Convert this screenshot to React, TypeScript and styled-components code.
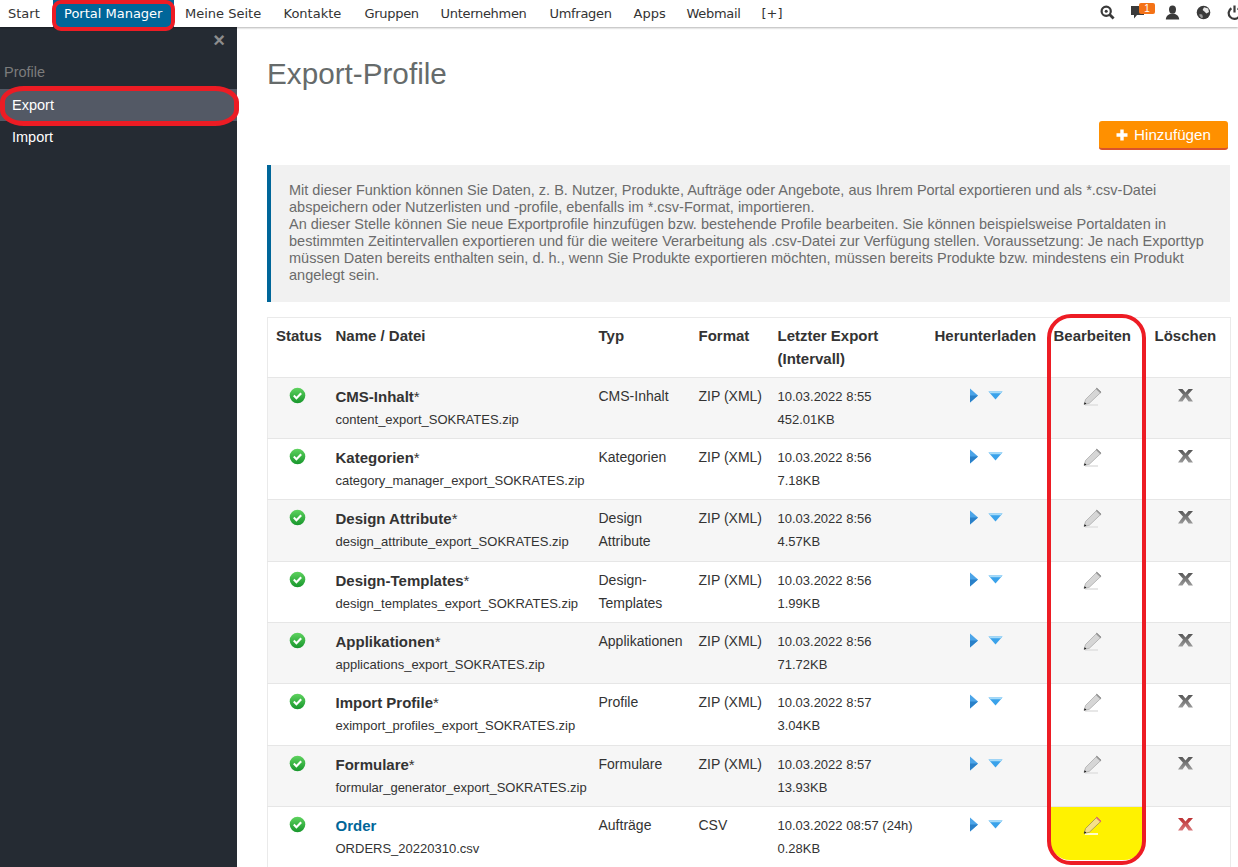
import React, { FC } from 'react'
import styled, { createGlobalStyle } from 'styled-components'

interface IProfile {
  name: string;
  file: string;
  type: string[];
  format: string;
  date: string;
  size: string;
  custom?: boolean;
}

const NAV_ITEMS = [
  { label: 'Start', width: 45 },
  { label: 'Portal Manager', width: 121 },
  { label: 'Meine Seite', width: 98.5 },
  { label: 'Kontakte', width: 81 },
  { label: 'Gruppen', width: 76, tight: true },
  { label: 'Unternehmen', width: 109, tight: true },
  { label: 'Umfragen', width: 84, tight: true },
  { label: 'Apps', width: 53 },
  { label: 'Webmail', width: 75, tight: true },
  { label: '[+]', width: 40 },
];

const PROFILES: IProfile[] = [
  { name: 'CMS-Inhalt', file: 'content_export_SOKRATES.zip', type: ['CMS-Inhalt'], format: 'ZIP (XML)', date: '10.03.2022 8:55', size: '452.01KB' },
  { name: 'Kategorien', file: 'category_manager_export_SOKRATES.zip', type: ['Kategorien'], format: 'ZIP (XML)', date: '10.03.2022 8:56', size: '7.18KB' },
  { name: 'Design Attribute', file: 'design_attribute_export_SOKRATES.zip', type: ['Design', 'Attribute'], format: 'ZIP (XML)', date: '10.03.2022 8:56', size: '4.57KB' },
  { name: 'Design-Templates', file: 'design_templates_export_SOKRATES.zip', type: ['Design-', 'Templates'], format: 'ZIP (XML)', date: '10.03.2022 8:56', size: '1.99KB' },
  { name: 'Applikationen', file: 'applications_export_SOKRATES.zip', type: ['Applikationen'], format: 'ZIP (XML)', date: '10.03.2022 8:56', size: '71.72KB' },
  { name: 'Import Profile', file: 'eximport_profiles_export_SOKRATES.zip', type: ['Profile'], format: 'ZIP (XML)', date: '10.03.2022 8:57', size: '3.04KB' },
  { name: 'Formulare', file: 'formular_generator_export_SOKRATES.zip', type: ['Formulare'], format: 'ZIP (XML)', date: '10.03.2022 8:57', size: '13.93KB' },
  { name: 'Order', file: 'ORDERS_20220310.csv', type: ['Aufträge'], format: 'CSV', date: '10.03.2022 08:57 (24h)', size: '0.28KB', custom: true },
];

const StatusIcon: FC = () => (
  <svg width="17" height="17" viewBox="0 0 17 17">
    <defs>
      <linearGradient id="okFill" x1="0" y1="0" x2="0" y2="1">
        <stop offset="0" stopColor="#5fd35f" />
        <stop offset="1" stopColor="#17962c" />
      </linearGradient>
    </defs>
    <circle cx="8.5" cy="8.5" r="7.8" fill="url(#okFill)" />
    <path d="M4.8 8.6l2.6 2.6 4.8-5" fill="none" stroke="#fff" strokeWidth="2.1" />
  </svg>
);

const PlayIcon: FC = () => (
  <svg width="10" height="15" viewBox="0 0 10 15">
    <path d="M1 0.5L9 7.5L1 14.5Z" fill="#4ba4e8" />
    <path d="M1 7.5L9 7.5L1 14.5Z" fill="#2a80c8" />
  </svg>
);

const DownIcon: FC = () => (
  <svg width="15" height="9" viewBox="0 0 15 9">
    <path d="M0.5 0.5H14.5L7.5 8.5Z" fill="#3aa2ea" />
    <path d="M0.5 0.5H14.5L13 2.3H2Z" fill="#a5dbf9" />
  </svg>
);

const PencilIcon: FC<{ active?: boolean }> = ({ active }) => (
  <svg width="19" height="19" viewBox="0 0 19 19">
    <path d="M2 18H15" stroke={active ? '#ffffff' : '#e2e2e2'} strokeWidth="1.6" />
    <path d="M1 17.5L2.6 12.4L13.8 1.2L18 5.2L6.4 16.2Z" fill={active ? '#f6e08a' : '#d6d6d6'} stroke={active ? '#8f8550' : '#a3a3a3'} strokeWidth="0.7" />
    <path d="M13.2 1.8L17.4 5.8L18 5.2L13.8 1.2Z" fill={active ? '#e2646a' : '#8f8f8f'} stroke={active ? '#e2646a' : '#8f8f8f'} strokeWidth="0.8" />
    <path d="M1 17.5L1.7 15.2L3.4 16.7Z" fill="#111" />
  </svg>
);

const DeleteIcon: FC<{ active?: boolean }> = ({ active }) => (
  <svg width="17" height="16" viewBox="0 0 17 16">
    <defs>
      <linearGradient id="delGray" x1="0" y1="0" x2="0" y2="1">
        <stop offset="0" stopColor="#555" />
        <stop offset="1" stopColor="#9a9a9a" />
      </linearGradient>
      <linearGradient id="delRed" x1="0" y1="0" x2="0" y2="1">
        <stop offset="0" stopColor="#bb2f31" />
        <stop offset="1" stopColor="#d9787b" />
      </linearGradient>
    </defs>
    <path d="M1 2H5.5L8.5 5.5L11.5 2H16L11 7.8L16 14.5H11.5L8.5 10.3L5.5 14.5H1L6 7.8Z" fill={active ? 'url(#delRed)' : 'url(#delGray)'} />
  </svg>
);

const SearchIcon: FC = () => (
  <svg width="15" height="15" viewBox="0 0 15 15">
    <circle cx="6.2" cy="6.2" r="4.6" fill="none" stroke="#3a3a3a" strokeWidth="2.2" />
    <circle cx="6.2" cy="6.2" r="1.5" fill="#3a3a3a" />
    <path d="M9.6 9.6L13.6 13.6" stroke="#3a3a3a" strokeWidth="2.8" />
  </svg>
);

const ChatIcon: FC = () => (
  <svg width="14" height="14" viewBox="0 0 14 14">
    <path d="M0 1H13V10H6L3 13.5V10H0Z" fill="#3a3a3a" />
  </svg>
);

const UserIcon: FC = () => (
  <svg width="15" height="15" viewBox="0 0 15 15">
    <ellipse cx="7.5" cy="4.6" rx="3.5" ry="4.2" fill="#3a3a3a" />
    <path d="M0.8 14.5C1 11 3.5 9.6 5.6 8.8H9.4C11.5 9.6 14 11 14.2 14.5Z" fill="#3a3a3a" />
  </svg>
);

const GlobeIcon: FC = () => (
  <svg width="15" height="15" viewBox="0 0 15 15">
    <circle cx="7.5" cy="7.5" r="6.8" fill="#3a3a3a" />
    <path d="M8 2.2L12.2 3.6L13 7L10.4 8.6L8.4 6.6L6.6 5Z" fill="#e9e9e9" />
    <path d="M3.4 9L6.2 9.6L7 12.6L5.4 13L3.6 11Z" fill="#9a9a9a" />
  </svg>
);

const PowerIcon: FC = () => (
  <svg width="15" height="15" viewBox="0 0 15 15">
    <path d="M4.4 3.2A5.8 5.8 0 1 0 10.6 3.2" fill="none" stroke="#3a3a3a" strokeWidth="2.2" />
    <path d="M7.5 0.5V7.5" stroke="#3a3a3a" strokeWidth="2.2" />
  </svg>
);

const PlusIcon: FC = () => (
  <svg width="12" height="12" viewBox="0 0 12 12">
    <path d="M6 0.5V11.5M0.5 6H11.5" stroke="#fff" strokeWidth="3.4" />
  </svg>
);

const App: FC = () => (
  <Page>
    <GlobalStyle />
    <TopBar>
      <NavList>
        {NAV_ITEMS.map(({ label, width, tight }) => (
          <NavItem key={label} width={width} tight={tight} active={label === 'Portal Manager'}>{label}</NavItem>
        ))}
      </NavList>
      <TopIcons>
        <TopIcon><SearchIcon /></TopIcon>
        <ChatTopIcon>
          <ChatIcon />
          <Badge>1</Badge>
        </ChatTopIcon>
        <TopIcon><UserIcon /></TopIcon>
        <TopIcon><GlobeIcon /></TopIcon>
        <TopIcon><PowerIcon /></TopIcon>
      </TopIcons>
    </TopBar>
    <Body>
      <Sidebar>
        <CloseRow>×</CloseRow>
        <SideTitle>Profile</SideTitle>
        <SideItem active>Export</SideItem>
        <SideItem>Import</SideItem>
      </Sidebar>
      <Main>
        <Title>Export-Profile</Title>
        <Actions>
          <AddButton><PlusIcon />Hinzufügen</AddButton>
        </Actions>
        <InfoBox>
          Mit dieser Funktion können Sie Daten, z. B. Nutzer, Produkte, Aufträge oder Angebote, aus Ihrem Portal exportieren und als *.csv-Datei abspeichern oder Nutzerlisten und -profile, ebenfalls im *.csv-Format, importieren.
          <br />
          An dieser Stelle können Sie neue Exportprofile hinzufügen bzw. bestehende Profile bearbeiten. Sie können beispielsweise Portaldaten in bestimmten Zeitintervallen exportieren und für die weitere Verarbeitung als .csv-Datei zur Verfügung stellen. Voraussetzung: Je nach Exporttyp müssen Daten bereits enthalten sein, d. h., wenn Sie Produkte exportieren möchten, müssen bereits Produkte bzw. mindestens ein Produkt angelegt sein.
        </InfoBox>
        <TableWrapper>
          <Table>
            <colgroup>
              <col width="60" />
              <col width="263" />
              <col width="100" />
              <col width="79" />
              <col width="157" />
              <col width="119" />
              <col width="101" />
              <col width="84" />
            </colgroup>
            <thead>
              <tr>
                <Th>Status</Th>
                <Th>Name / Datei</Th>
                <Th>Typ</Th>
                <Th>Format</Th>
                <Th>Letzter Export<br />(Intervall)</Th>
                <Th>Herunterladen</Th>
                <Th>Bearbeiten</Th>
                <Th>Löschen</Th>
              </tr>
            </thead>
            <tbody>
              {PROFILES.map((profile) => (
                <Row key={profile.name}>
                  <IconCell><StatusIcon /></IconCell>
                  <Td>
                    <ProfileName custom={profile.custom}>
                      {profile.name}{!profile.custom && <Star>*</Star>}
                    </ProfileName>
                    <SmallLine>{profile.file}</SmallLine>
                  </Td>
                  <Td>{profile.type.map((line) => <div key={line}>{line}</div>)}</Td>
                  <Td>{profile.format}</Td>
                  <Td>
                    <SmallLine>{profile.date}</SmallLine>
                    <SmallLine>{profile.size}</SmallLine>
                  </Td>
                  <IconCell>
                    <DownloadIcons><PlayIcon /><DownIcon /></DownloadIcons>
                  </IconCell>
                  <EditCell>
                    {profile.custom && <Highlight />}
                    <PencilWrap><PencilIcon active={profile.custom} /></PencilWrap>
                  </EditCell>
                  <DeleteCell><DeleteIcon active={profile.custom} /></DeleteCell>
                </Row>
              ))}
            </tbody>
          </Table>
          <ColumnMark />
        </TableWrapper>
      </Main>
    </Body>
  </Page>
);

export default App;

const GlobalStyle = createGlobalStyle`
  html, body {
    margin: 0;
    height: 867px;
    overflow: hidden;
    background: #fff;
  }
  *, *::before, *::after {
    box-sizing: border-box;
  }
`;

const Page = styled.div`
  width: 1238px;
  height: 867px;
  overflow: hidden;
  font-family: "Liberation Sans", Arial, sans-serif;
  font-size: 14px;
  color: #333;
`;

const TopBar = styled.div`
  position: relative;
  z-index: 2;
  display: flex;
  justify-content: space-between;
  height: 27px;
  background: #fff;
  box-shadow: 0 1px 2px rgba(0, 0, 0, 0.3);
`;

const NavList = styled.div`
  display: flex;
  padding-left: 8px;
  font-family: "DejaVu Sans", Verdana, sans-serif;
  font-size: 13px;
`;

const NavItem = styled.div<{ active?: boolean; tight?: boolean; width: number }>`
  position: relative;
  width: ${({ width }) => width}px;
  height: 27px;
  line-height: 27px;
  padding-left: 11px;
  white-space: nowrap;
  letter-spacing: ${({ tight }) => (tight ? '-0.3px' : '0')};
  color: ${({ active }) => (active ? '#fff' : '#333')};
  background: ${({ active }) => (active ? '#006699' : 'transparent')};

  &:first-child {
    padding-left: 0;
  }

  ${({ active }) => active && `
    &::after {
      content: "";
      position: absolute;
      left: -1px;
      right: -1px;
      top: 0;
      bottom: -4px;
      border: 4px solid #ed1c24;
      border-radius: 9px;
    }
  `}
`;

const TopIcons = styled.div`
  display: flex;
  align-items: center;
  gap: 16px;
  margin-right: -4px;
  padding-bottom: 2px;
`;

const TopIcon = styled.div`
  position: relative;
  display: flex;
  width: 15px;
  height: 15px;
`;

const ChatTopIcon = styled(TopIcon)`
  margin-right: 3px;
`;

const Badge = styled.span`
  position: absolute;
  left: 8px;
  top: -2px;
  width: 16px;
  height: 11px;
  border-radius: 2px;
  background: #f47216;
  color: #fff;
  font-size: 10px;
  line-height: 11px;
  text-align: center;
`;

const Body = styled.div`
  display: flex;
  height: 840px;
`;

const Sidebar = styled.div`
  flex: 0 0 237px;
  background: #252b33;
  font-size: 14.5px;
`;

const CloseRow = styled.div`
  height: 27px;
  padding-right: 12px;
  text-align: right;
  color: #8d8d8d;
  font-size: 20px;
  font-weight: bold;
  line-height: 26px;
`;

const SideTitle = styled.div`
  height: 35px;
  padding-left: 4px;
  color: #7c7c7c;
  line-height: 37px;
`;

const SideItem = styled.div<{ active?: boolean }>`
  position: relative;
  height: 32px;
  padding-left: 12px;
  line-height: 32px;
  color: #fff;
  background: ${({ active }) => (active ? '#535965' : 'transparent')};

  ${({ active }) => active && `
    &::after {
      content: "";
      position: absolute;
      left: 0;
      right: -2px;
      top: -3px;
      bottom: -5px;
      border: 5px solid #ed1c24;
      border-radius: 24px / 16px;
    }
  `}
`;

const Main = styled.div`
  flex: 1;
  min-width: 0;
  padding: 0 8px 0 30px;
`;

const Title = styled.h1`
  margin: 0;
  padding-top: 27px;
  height: 94px;
  color: #666b6b;
  font-size: 29.7px;
  font-weight: 400;
  line-height: 40px;
`;

const Actions = styled.div`
  display: flex;
  justify-content: flex-end;
  padding-right: 2px;
  height: 44px;
`;

const AddButton = styled.button`
  display: flex;
  align-items: center;
  justify-content: center;
  gap: 6px;
  width: 129px;
  height: 29px;
  padding: 0;
  border: 0;
  border-bottom: 2px solid #d9532c;
  border-radius: 3px;
  background: #ff9000;
  color: #fff;
  font-family: inherit;
  font-size: 15.2px;
`;

const InfoBox = styled.div`
  height: 137px;
  padding: 17px 20px 0 18px;
  border-left: 4px solid #006699;
  background: #f1f1f1;
  color: #6b6b6b;
  font-size: 14.5px;
  line-height: 17.1px;
`;

const TableWrapper = styled.div`
  position: relative;
  margin-top: 15px;
`;

const Table = styled.table`
  width: 963px;
  table-layout: fixed;
  border-collapse: collapse;
  border: 1px solid #eaeaea;
`;

const Th = styled.th`
  height: 59.5px;
  padding: 6px 8px 5px 8px;
  font-weight: bold;
  font-size: 15px;
  line-height: 23px;
  text-align: left;
  vertical-align: top;
  white-space: nowrap;
`;

const Row = styled.tr`
  border-top: 1px solid #e6e6e6;

  &:nth-child(odd) {
    background: #f6f6f6;
  }
`;

const Td = styled.td`
  height: 61.4px;
  padding: 7px 8px 6px 8px;
  line-height: 23px;
  vertical-align: top;
  white-space: nowrap;
`;

const IconCell = styled(Td)`
  padding: 9px 8px 6px;
  text-align: center;

  svg {
    display: inline-block;
    vertical-align: top;
  }
`;

const EditCell = styled(IconCell)`
  position: relative;
  padding-right: 16px;
`;

const DeleteCell = styled(IconCell)`
  padding-right: 14px;
`;

const Highlight = styled.div`
  position: absolute;
  left: 4px;
  right: 3px;
  top: 0;
  height: 53px;
  border-radius: 0 0 20px 20px;
  background: #fff200;
`;

const PencilWrap = styled.div`
  position: relative;
  height: 19px;
`;

const DownloadIcons = styled.div`
  display: flex;
  justify-content: center;
  align-items: center;
  gap: 9px;
  height: 15px;
  margin-top: 1px;
`;

const ProfileName = styled.div<{ custom?: boolean }>`
  font-size: 15px;
  font-weight: bold;
  color: ${({ custom }) => (custom ? '#006699' : '#333')};
`;

const Star = styled.span`
  font-weight: normal;
`;

const SmallLine = styled.div`
  font-size: 13px;
`;

const ColumnMark = styled.div`
  position: absolute;
  left: 780px;
  top: -3px;
  width: 99px;
  height: 551px;
  border: 4.5px solid #ed1c24;
  border-radius: 24px;
  pointer-events: none;
`;
